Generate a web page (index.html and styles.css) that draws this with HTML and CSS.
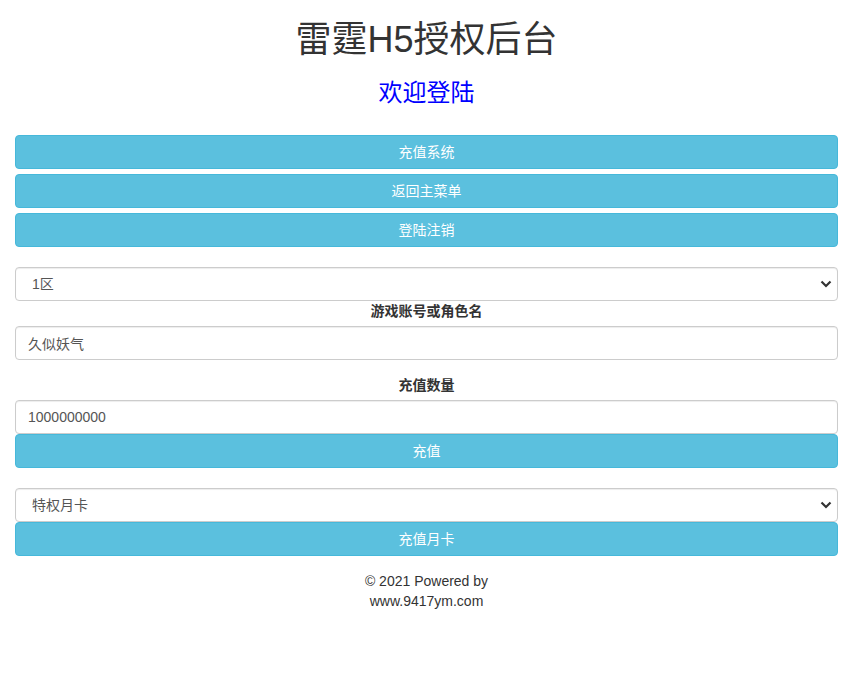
FILE: index.html
```html
<!DOCTYPE html>
<html lang="zh-CN">
<head>
  <meta charset="UTF-8" />
  <meta name="viewport" content="width=device-width, initial-scale=1.0"/>
  <title>雷霆H5授权后台</title>
  <link rel="stylesheet" href="styles.css">
</head>
<body>
  <div class="container">
    <h1 class="title">雷霆H5授权后台</h1>
    <h3 class="welcome">欢迎登陆</h3>

    <div class="menu">
      <button class="btn">充值系统</button>
      <button class="btn">返回主菜单</button>
      <button class="btn">登陆注销</button>
    </div>

    <div class="form">
      <div class="select-wrap">
        <select class="field select">
          <option>1区</option>
        </select>
        <svg class="chevron" width="12" height="8" viewBox="0 0 12 8"><path d="M1.5 1.5 L6 6 L10.5 1.5" fill="none" stroke="#333" stroke-width="2.2"/></svg>
      </div>
      <label class="label">游戏账号或角色名</label>
      <input class="field" type="text" value="久似妖气">

      <label class="label label-gap">充值数量</label>
      <input class="field" type="text" value="1000000000">
      <button class="btn">充值</button>

      <div class="select-wrap group-gap">
        <select class="field select">
          <option>特权月卡</option>
        </select>
        <svg class="chevron" width="12" height="8" viewBox="0 0 12 8"><path d="M1.5 1.5 L6 6 L10.5 1.5" fill="none" stroke="#333" stroke-width="2.2"/></svg>
      </div>
      <button class="btn">充值月卡</button>
    </div>

    <p class="footer">© 2021 Powered by<br>www.9417ym.com</p>
  </div>
</body>
</html>
```

FILE: styles.css
```css
body {
  margin: 0;
  background: #fff;
  color: #333;
  font-family: "Liberation Sans", Arial, "Noto Sans CJK SC", sans-serif;
  font-size: 14px;
  line-height: 20px;
}

.container {
  padding: 0 20px 0 15px;
}

.title {
  margin: 20px 0 0;
  font-size: 36px;
  line-height: 40px;
  font-weight: normal;
  text-align: center;
}

.welcome {
  margin: 20px 0 29px;
  font-size: 24px;
  line-height: 26px;
  font-weight: normal;
  color: #0000ff;
  text-align: center;
}

.menu {
  display: flex;
  flex-direction: column;
  gap: 5px;
  margin-bottom: 20px;
}

.form {
  display: flex;
  flex-direction: column;
}

.btn {
  display: block;
  width: 100%;
  height: 34px;
  padding: 6px 12px;
  background-color: #5bc0de;
  border: 1px solid #46b8da;
  border-radius: 4px;
  color: #fff;
  font-family: inherit;
  font-size: 14px;
  line-height: 20px;
  cursor: pointer;
}

.btn:hover {
  background-color: #31b0d5;
}

.field {
  display: block;
  width: 100%;
  height: 34px;
  box-sizing: border-box;
  padding: 6px 12px;
  border: 1px solid #ccc;
  border-radius: 4px;
  background: #fff;
  color: #555;
  font-family: inherit;
  font-size: 14px;
  line-height: 20px;
  box-shadow: inset 0 1px 1px rgba(0,0,0,0.075);
  outline: none;
}

.select-wrap {
  position: relative;
}

.select {
  appearance: none;
  -webkit-appearance: none;
  padding-left: 16px;
}

.chevron {
  position: absolute;
  right: 6px;
  top: 13px;
  pointer-events: none;
}

.group-gap {
  margin-top: 20px;
}

.label {
  display: block;
  margin-bottom: 5px;
  font-weight: bold;
  font-size: 14px;
  text-align: center;
  color: #333;
}

.label-gap {
  margin-top: 15px;
}

.footer {
  margin: 15px 0 0;
  text-align: center;
}
```
